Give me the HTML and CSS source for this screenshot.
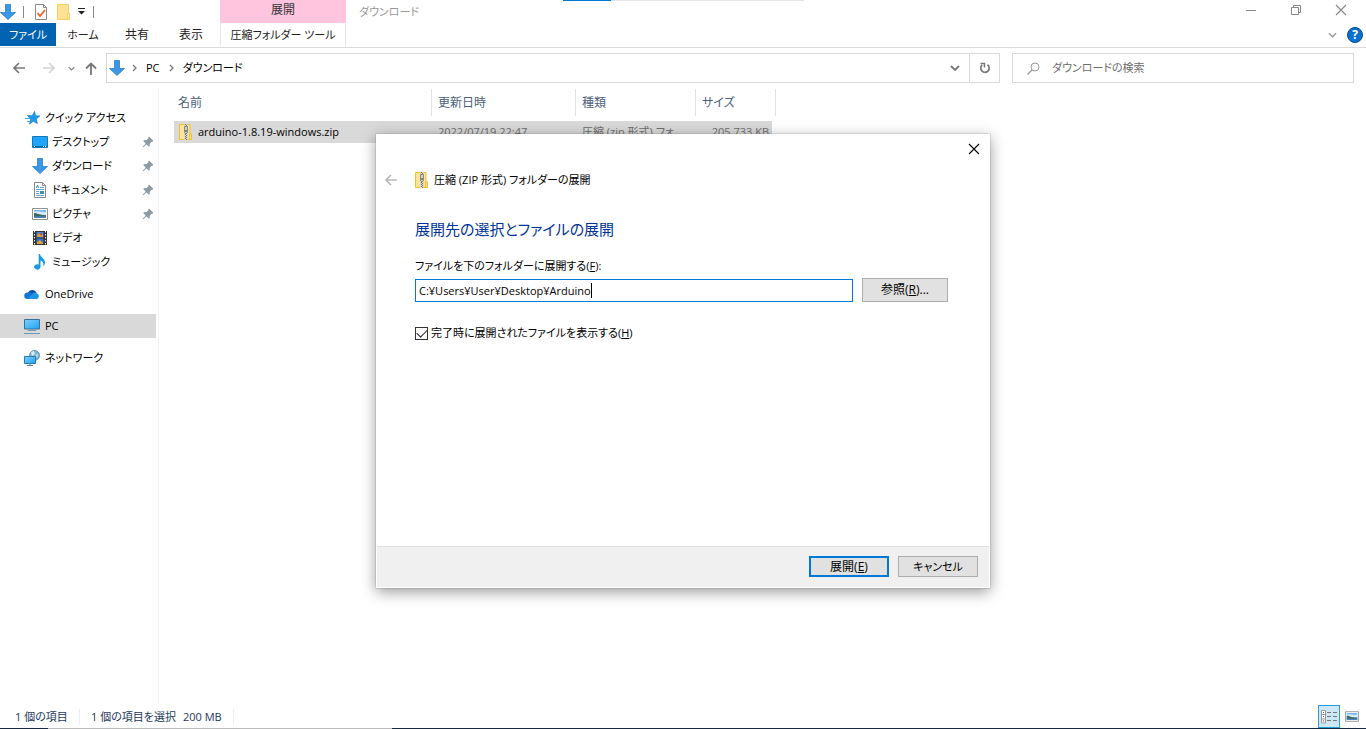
FILE: index.html
```html
<!DOCTYPE html>
<html lang="ja">
<head>
<meta charset="utf-8">
<title>ダウンロード</title>
<link rel="stylesheet" href="styles.css">
</head>
<body>
<svg class="defs" aria-hidden="true">
  <defs>
    <linearGradient id="blue" x1="0" y1="0" x2="1" y2="1"><stop offset="0" stop-color="#7fd0ff"/><stop offset="1" stop-color="#1ba1f2"/></linearGradient>
    <symbol id="i-down" viewBox="0 0 16 16"><path d="M5.500.500h5v8h5L8 15.500.500 8.500h5z" fill="#3a96e6" stroke="#2a80cf" stroke-width=".8"/></symbol>
    <symbol id="i-zip" viewBox="0 0 14 16"><path d="M.5.500h10.500v9.500h1.500v5.500H.5z" fill="#ffe493" stroke="#f0c02f"/><path d="M10.500 10h2v5.500h-2z" fill="#ffdf80" stroke="#f0c02f" stroke-width=".8"/><path d="M5 0h4v16H5z" fill="#d8d4c6"/><path d="M6.500 0v16" stroke="#77766c" stroke-width="1" stroke-dasharray="1 1"/><path d="M7.500 1v15" stroke="#77766c" stroke-width="1" stroke-dasharray="1 1"/><path d="M5.500 2.500h3v6l-1.500 1.500-1.500-1.500z" fill="#d0d0d0" stroke="#777" stroke-width=".8"/><path d="M7 6v2" stroke="#333"/></symbol>
    <symbol id="i-pin" viewBox="0 0 12 12"><path d="M7 .5 11.500 5l-1 .8-.8-.1-2 2 .2 2.300-.9.700L4.500 8.300 1 11.500l-.5-.5 3.200-3.500L1.300 5l.7-.9 2.300.2 2-2L6.200 1.300z" fill="#8e9aa3"/></symbol>
    <symbol id="i-picture" viewBox="0 0 16 12"><path d="M.5.500h15v11H.5z" fill="#fff" stroke="#909090"/><path d="M2 2h12v8H2z" fill="#7ab8f2"/><path d="M2 4c4-2 8 1 12 0v3H2z" fill="#d8edfb"/><path d="M2 5c3 0 5 2 12 2v2H2z" fill="#3e6b61"/><path d="M2 8.500h12V10H2z" fill="#4b86bd"/></symbol>
    <symbol id="i-back" viewBox="0 0 12 12"><path d="M12 6H1M6 1 1 6l5 5" fill="none" stroke="currentColor" stroke-width="1.600"/></symbol>
    <symbol id="i-chev" viewBox="0 0 10 6"><path d="m1 1 4 4 4-4" fill="none" stroke="currentColor" stroke-width="1.500"/></symbol>
    <symbol id="i-right" viewBox="0 0 5 8"><path d="m1 1 3 3-3 3" fill="none" stroke="currentColor" stroke-width="1.300"/></symbol>
    <symbol id="i-close" viewBox="0 0 12 12"><path d="m1 1 10 10M11 1 1 11" fill="none" stroke="currentColor" stroke-width="1.100"/></symbol>
  </defs>
</svg>

<div class="edge-top"><i class="edge-active"></i><i class="edge-rest"></i></div>

<header class="titlebar">
  <div class="quick">
    <svg class="ic16"><use href="#i-down"/></svg>
    <i class="quick-sep"></i>
    <button class="plain" aria-label="プロパティ"><svg width="14" height="16" viewBox="0 0 14 16"><path d="M1.500.500h8l3 3v12h-11z" fill="#fff" stroke="#8a8a8a"/><path d="M9.500.500v3h3" fill="none" stroke="#8a8a8a"/><path d="m3.500 9 2.500 3 5-6" fill="none" stroke="#e8622a" stroke-width="1.800"/></svg></button>
    <button class="plain" aria-label="新しいフォルダー"><svg width="14" height="16" viewBox="0 0 14 16"><path d="M.5.500h11v9h1v6H.5z" fill="#ffe394" stroke="#f5cf62"/><path d="M10.500 9.500h2v6h-2z" fill="#fff0bf" stroke="#f5cf62"/></svg></button>
    <button class="plain customize" aria-label="カスタマイズ"><svg width="7" height="7" viewBox="0 0 7 7"><path d="M0 0h7v1H0zM0 3h7L3.500 6.500z" fill="#222"/></svg></button>
    <i class="quick-sep"></i>
  </div>
  <div class="context-title">展開</div>
  <h1 class="window-title">ダウンロード</h1>
  <div class="window-buttons">
    <button class="plain" aria-label="最小化"><svg width="10" height="10"><path d="M0 5.500h10" stroke="#888"/></svg></button>
    <button class="plain" aria-label="元に戻す"><svg width="10" height="10" fill="none" stroke="#888"><path d="M.5 2.500h7v7h-7zM2.500 2.500v-2h7v7h-2"/></svg></button>
    <button class="plain close" aria-label="閉じる"><svg width="12" height="12"><use href="#i-close"/></svg></button>
  </div>
</header>

<nav class="tabs">
  <button class="tab file">ファイル</button>
  <button class="tab">ホーム</button>
  <button class="tab kanji">共有</button>
  <button class="tab kanji">表示</button>
  <button class="tab context">圧縮フォルダー ツール</button>
  <div class="ribbon-tools">
    <button class="plain" aria-label="リボンの展開"><svg width="9" height="6"><use href="#i-chev"/></svg></button>
    <button class="help" aria-label="ヘルプ">?</button>
  </div>
</nav>

<div class="navbar">
  <div class="history">
    <button class="plain" aria-label="戻る"><svg width="12" height="12"><use href="#i-back"/></svg></button>
    <button class="plain forward" aria-label="進む"><svg width="12" height="12" viewBox="0 0 12 12"><path d="M0 6h11M6 1l5 5-5 5" fill="none" stroke="currentColor" stroke-width="1.600"/></svg></button>
    <button class="plain recent" aria-label="最近の場所"><svg width="7" height="5"><use href="#i-chev"/></svg></button>
    <button class="plain" aria-label="上へ"><svg width="12" height="13" viewBox="0 0 12 13"><path d="M6 13V1.500M1 6.500l5-5 5 5" fill="none" stroke="currentColor" stroke-width="1.800"/></svg></button>
  </div>
  <div class="address">
    <svg class="ic16"><use href="#i-down"/></svg>
    <svg class="crumb-sep" width="5" height="8"><use href="#i-right"/></svg>
    <a href="#pc">PC</a>
    <svg class="crumb-sep" width="5" height="8"><use href="#i-right"/></svg>
    <a href="#downloads">ダウンロード</a>
    <button class="plain drop" aria-label="以前の場所"><svg width="10" height="6" viewBox="0 0 10 6"><path d="m1 1 4 4 4-4" fill="none" stroke="#777" stroke-width="1.800"/></svg></button>
    <button class="plain refresh" aria-label="更新"><svg width="12" height="12" viewBox="0 0 12 12"><path d="M8.500 2.800A4.200 4.200 0 1 1 3.200 3" fill="none" stroke="#777" stroke-width="1.700"/><path d="M1.500 1.500h4v4" fill="none" stroke="#777" stroke-width="1.500"/></svg></button>
  </div>
  <div class="search">
    <svg width="13" height="13" viewBox="0 0 13 13"><circle cx="8" cy="5" r="4" fill="none" stroke="#999"/><path d="M5 8 .5 12.500" stroke="#999" stroke-width="1.200"/></svg>
    <input type="text" aria-label="検索" placeholder="ダウンロードの検索">
  </div>
</div>

<main class="body">
  <nav class="sidebar">
    <div class="group">
      <a class="item" href="#quick"><svg class="ic16" viewBox="0 0 16 16"><path d="m10.500 1.500 1 4.300 4.300.2-3.500 3 1 4.500-4-2.300-3.800 3L6.700 9.400 4 6l4.300-.4z" fill="#1e9bea" stroke="#1479c9" stroke-width=".7"/><path d="M3 5.500h4M1 8.500h5M3 11.500h3" stroke="#45b0f0"/></svg>クイック アクセス</a>
      <a class="item child" href="#desktop"><svg class="ic16" viewBox="0 0 16 16"><path d="M.5 2.500h15v11H.5z" fill="#1ea5fa" stroke="#0f78bf"/><path d="M1 12h14v1H1z" fill="#0967a8"/><path d="M2 12.500h1M11 12.500h1M13 12.500h1" stroke="#fff"/></svg>デスクトップ<svg class="pin"><use href="#i-pin"/></svg></a>
      <a class="item child" href="#downloads"><svg class="ic16"><use href="#i-down"/></svg>ダウンロード<svg class="pin"><use href="#i-pin"/></svg></a>
      <a class="item child" href="#documents"><svg class="ic16" viewBox="0 0 16 16"><path d="M2.500.500h8l3 3v12h-11z" fill="#fff" stroke="#888"/><path d="M10.500.500v3h3" fill="none" stroke="#888"/><path d="M4 7.500h8M4 9.500h3M4 11.500h3M4 13.500h8M8 5.500h4" stroke="#6aa6cf"/><path d="m4.500 6 1-3 1 3" fill="none" stroke="#2f86c6"/><path d="M8 9h4v3H8z" fill="#4a8cab"/></svg>ドキュメント<svg class="pin"><use href="#i-pin"/></svg></a>
      <a class="item child" href="#pictures"><svg class="ic16"><use href="#i-picture"/></svg>ピクチャ<svg class="pin"><use href="#i-pin"/></svg></a>
      <a class="item child" href="#videos"><svg class="ic16" viewBox="0 0 16 16"><path d="M1 1h14v14H1z" fill="#333"/><path d="M2.500 1v14M13.500 1v14" stroke="#eee" stroke-dasharray="1.500 1.500"/><path d="M4.500 2h7v5.500h-7z" fill="#4e7de0"/><path d="M4.500 8.500h7V14h-7z" fill="#3a6bd0"/><path d="m5 6 2-3 2 3 2-2v3H5z" fill="#e0a52c"/><path d="m5 12 3-2 3 3v1H5z" fill="#e0a52c"/><path d="M8 3h2v2H8z" fill="#cf5044"/></svg>ビデオ</a>
      <a class="item child" href="#music"><svg class="ic16" viewBox="0 0 16 16"><path d="M8 0c.5 3.500 4.500 4.300 5 8 .2 2-.8 3.500-2 4.500C12 9.500 11 7 8.500 6.500V13a3.200 2.700 0 1 1-1.800-2.500V0z" fill="#1398ec"/></svg>ミュージック</a>
    </div>
    <div class="group"><a class="item" href="#onedrive"><svg class="ic16" viewBox="0 0 16 16"><path d="M4 7a4.500 4.500 0 0 1 8.500 0L8 10z" fill="#0a4fa8"/><path d="M3.500 6.500c2-.8 3.500 0 5 1.200L5 13H3.500a3.200 3.200 0 0 1 0-6.500z" fill="#1276d3"/><path d="M8.500 7.700c1-1.200 3-1.500 4.200-.4A3 3 0 0 1 13 13H3l4-3z" fill="#1f95e6"/></svg>OneDrive</a></div>
    <div class="group"><a class="item selected" href="#pc"><svg class="ic16" viewBox="0 0 16 16"><path d="M.5 1.500h15v9.500H.5z" fill="url(#blue)" stroke="#3b6f94"/><path d="M4 12.500h8M0 15.500h16" stroke="#6a98ba"/></svg>PC</a></div>
    <div class="group"><a class="item" href="#network"><svg class="ic16" viewBox="0 0 16 16"><circle cx="10.500" cy="5.500" r="5" fill="#7fb4d3" stroke="#4a83a8" stroke-width=".8"/><path d="m7 2 3-1 1 3-3 2zM12 5l2-1-1 4z" fill="#d4ecf8"/><path d="M.5 6.500h11v7H.5z" fill="url(#blue)" stroke="#2b79ad"/><path d="M3 15.500h6M6 13v2" stroke="#4a83a8"/></svg>ネットワーク</a></div>
  </nav>

  <section class="files">
    <table>
      <colgroup><col class="c-name"><col class="c-date"><col class="c-type"><col class="c-size"></colgroup>
      <thead><tr><th>名前</th><th>更新日時</th><th>種類</th><th>サイズ</th></tr></thead>
      <tbody><tr>
        <td class="name"><span class="file-name"><svg width="14" height="16"><use href="#i-zip"/></svg>arduino-1.8.19-windows.zip</span></td>
        <td>2022/07/19 22:47</td><td>圧縮 (zip 形式) フォ</td><td class="size">205,733 KB</td>
      </tr></tbody>
    </table>
  </section>
</main>

<footer class="status">
  <span class="count">1 個の項目</span>
  <span class="selection"><span>1 個の項目を選択</span><span>200 MB</span></span>
  <div class="views">
    <button class="view on" aria-label="詳細"><svg width="16" height="14" viewBox="0 0 16 14"><path d="M.5.500h4v12.500h-4zM.5 4.500h4M.5 9h4" fill="#fff" stroke="#999"/><path d="M2 2h1v1H2z" fill="#287a4c"/><path d="M2 6h1v1H2z" fill="#287bea"/><path d="M2 10.500h1v1H2z" fill="#c22"/><path d="M6 2.500h4M12 2.500h4M6 6.500h4M12 6.500h4M6 10.500h4M12 10.500h4" stroke="#777"/></svg></button>
    <button class="view" aria-label="大アイコン"><svg width="14" height="11"><use href="#i-picture"/></svg></button>
  </div>
</footer>
<div class="edge-bottom"><i></i><i class="light"></i><i class="grow"></i></div>

<form class="dialog" role="dialog" aria-labelledby="dlg-title">
  <div class="dlg-top"><button type="button" class="plain" aria-label="閉じる"><svg width="12" height="12"><use href="#i-close"/></svg></button></div>
  <div class="dlg-title">
    <button type="button" class="plain" aria-label="戻る"><svg width="12" height="12"><use href="#i-back"/></svg></button>
    <svg width="14" height="16"><use href="#i-zip"/></svg>
    <span id="dlg-title">圧縮 (ZIP 形式) フォルダーの展開</span>
  </div>
  <div class="dlg-body">
    <h2>展開先の選択とファイルの展開</h2>
    <label class="path-label" for="path">ファイルを下のフォルダーに展開する(<u>F</u>):</label>
    <div class="path-row">
      <div class="path-box"><input id="path" type="text" value="C:¥Users¥User¥Desktop¥Arduino"><i class="caret"></i></div>
      <button type="button" class="btn browse kanji">参照(<u>R</u>)...</button>
    </div>
    <div class="check-row"><input id="show" type="checkbox" checked><label for="show">完了時に展開されたファイルを表示する(<u>H</u>)</label></div>
  </div>
  <div class="dlg-foot">
    <button type="button" class="btn primary kanji">展開(<u>E</u>)</button>
    <button type="button" class="btn">キャンセル</button>
  </div>
</form>
</body>
</html>
```
FILE: styles.css
```css
* { box-sizing: border-box; }
body {
  margin: 0; min-height: 100vh; display: flex; flex-direction: column; position: relative;
  background: #fff; color: #000; overflow: hidden;
  font: 11px/16px "Open Sans", "Noto Sans CJK JP", sans-serif;
  font-feature-settings: "palt";
}
button, input { font: inherit; font-feature-settings: inherit; color: inherit; margin: 0; }
a { color: inherit; text-decoration: none; }
svg { display: block; flex: none; }
.defs { position: absolute; width: 0; height: 0; }
.ic16 { width: 16px; height: 16px; }
.kanji { font-size: 12px; }
.plain { border: 0; padding: 0; background: none; display: flex; align-items: center; justify-content: center; }

.edge-top { position: absolute; top: 0; left: 563px; display: flex; height: 1px; }
.edge-active { width: 48px; background: #0078d7; }
.edge-rest { width: 193px; background: #e5e5e5; }

.titlebar { display: flex; height: 23px; }
.quick { width: 220px; display: flex; align-items: center; }
.quick .plain { margin-right: 9px; }
.quick .customize { margin-right: 8px; margin-left: -2px; }
.quick-sep { width: 1px; height: 12px; background: #888; margin: 0 10px 0 7px; }
.quick .customize + .quick-sep { margin: 0; }
.context-title { width: 126px; background: #ffc5de; text-align: center; padding-top: 2px; font-size: 12px; color: #333; }
.window-title { margin: 0; padding: 4px 0 0 13px; font: inherit; color: #999; }
.window-buttons { margin-left: auto; display: flex; padding-right: 3px; height: 20px; color: #888; }
.window-buttons .plain { width: 45px; }

.tabs { display: flex; height: 25px; border-bottom: 1px solid #dadbdc; padding-bottom: 1px; color: #222; }
.tab { border: 0; background: none; padding: 0; width: 54px; }
.tab.file { width: 56px; background: #0063b1; color: #fff; }
.tab.context { width: 126px; border: solid #e6e6e6; border-width: 0 1px; margin-left: 2px; }
.ribbon-tools { margin-left: auto; display: flex; align-items: center; gap: 10px; padding-right: 3px; color: #999; }
.help { width: 16px; height: 16px; border: 1px solid #004f91; border-radius: 50%; background: #0a6fce; color: #fff; padding: 0; font-size: 12px; font-weight: 700; line-height: 14px; }

.navbar { display: flex; padding: 5px 12px 5px 13px; height: 40px; }
.history { width: 93px; display: flex; align-items: center; gap: 18px; color: #777; }
.history .forward { color: #d5d5d5; }
.history .recent { margin: 0 -8px 0 -5px; }
.address { flex: 1 1 auto; display: flex; align-items: center; border: 1px solid #d9d9d9; padding-left: 2px; }
.crumb-sep { margin: 0 9px 0 7px; color: #777; }
.address a + .crumb-sep { margin-left: 9px; }
.drop { margin-left: auto; width: 28px; }
.refresh { width: 30px; align-self: stretch; border-left: 1px solid #d9d9d9; }
.search { flex: 0 1 342px; margin-left: 12px; display: flex; align-items: center; gap: 12px; padding-left: 14px; border: 1px solid #d9d9d9; }
.search input { flex: 1; min-width: 0; border: 0; padding: 0; outline: 0; }
.search input::placeholder { color: #6d6d6d; opacity: 1; }

.body { flex: 1; display: flex; }
.sidebar { width: 159px; padding: 18px 2px 0 0; border-right: 1px solid #f2f2f2; }
.group { margin-bottom: 8px; }
.item { display: flex; align-items: center; gap: 5px; height: 24px; padding-left: 24px; }
.item.child { padding: 0 2px 0 32px; gap: 4px; }
.item.selected { background: #d9d9d9; }
.pin { width: 12px; height: 12px; margin-left: auto; }

.files { padding: 1px 0 0 15px; flex: 1; }
table { width: 602px; table-layout: fixed; border-spacing: 0; }
.c-name { width: 258px; } .c-date { width: 144px; } .c-type { width: 120px; } .c-size { width: 80px; }
th { height: 27px; padding: 0 0 0 6px; border-right: 1px solid #e2e2e2; text-align: left; font-size: 12px; font-weight: 400; color: #4c607a; }
th:first-child { padding-left: 4px; }
td { height: 27px; padding: 0 0 0 6px; border-top: 5px solid #fff; background: #d9d9d9; background-clip: padding-box; color: #6d6d6d; white-space: nowrap; overflow: hidden; }
td.name { padding-left: 5px; color: #000; }
td.size { border-right: 4px solid #fff; padding-right: 3px; text-align: right; }
.file-name { display: flex; align-items: center; gap: 5px; }

.status { display: flex; align-items: center; height: 24px; padding: 1px 7px 0 0; color: #1e395b; }
.count, .selection { border-right: 1px solid #eee; }
.count { width: 80px; padding-left: 15px; }
.selection { width: 154px; padding-left: 11px; display: flex; gap: 7px; white-space: nowrap; }
.views { margin-left: auto; display: flex; }
.view { width: 22px; height: 23px; border: 0; padding: 0; background: none; display: flex; align-items: center; justify-content: center; }
.view.on { border: 1px solid #26a0da; background: #cce8f4; }
.view:last-child { width: 19px; justify-content: flex-end; }
.edge-bottom { display: flex; height: 1px; }
.edge-bottom i { width: 48px; background: #18283f; }
.edge-bottom .light { width: 344px; background: #bbb; }
.edge-bottom .grow { flex: 1; }

.dialog {
  position: absolute; left: 376px; top: 134px; width: 614px; min-height: 454px;
  display: flex; flex-direction: column; background: #fff; border: 1px solid #fff;
  box-shadow: 0 0 1px #666, 0 4px 14px rgba(0,0,0,.4);
}
.dlg-top { display: flex; justify-content: flex-end; height: 28px; padding-right: 9px; }
.dlg-title { display: flex; align-items: center; height: 34px; padding-left: 8px; }
.dlg-title .plain { color: #bbb; margin-right: 18px; }
.dlg-title span { margin-left: 5px; }
.dlg-body { flex: 1; padding: 20px 41px 0 38px; }
h2 { margin: 0; font-size: 15px; line-height: 24px; font-weight: 400; color: #003399; }
.path-label { display: block; margin-top: 17px; }
.path-row { display: flex; gap: 9px; margin-top: 4px; align-items: flex-end; }
.path-box { position: relative; flex: 1; }
.path-box input { display: block; width: 100%; height: 23px; border: 1px solid #0078d7; padding: 0 3px; outline: 0; }
.caret { position: absolute; left: 176px; top: 4px; width: 1px; height: 15px; background: #000; }
.btn { width: 80px; height: 21px; padding: 0; background: #e1e1e1; border: 1px solid #adadad; line-height: 16px; }
.browse { width: 86px; height: 24px; }
.btn.primary { border: 2px solid #0078d7; }
.check-row { display: flex; align-items: center; gap: 3px; margin-top: 23px; }
.check-row input { appearance: none; width: 13px; height: 13px; border: 1px solid #333; background: #fff; display: grid; place-items: center; }
.check-row input:checked::after { content: ""; width: 9px; height: 5px; border: solid #222; border-width: 0 0 1px 1px; transform: translateY(-1px) rotate(-45deg); }
.dlg-foot { display: flex; justify-content: flex-end; gap: 9px; height: 41px; padding: 9px 11px 0 0; background: #f0f0f0; border-top: 1px solid #dfdfdf; }
```
